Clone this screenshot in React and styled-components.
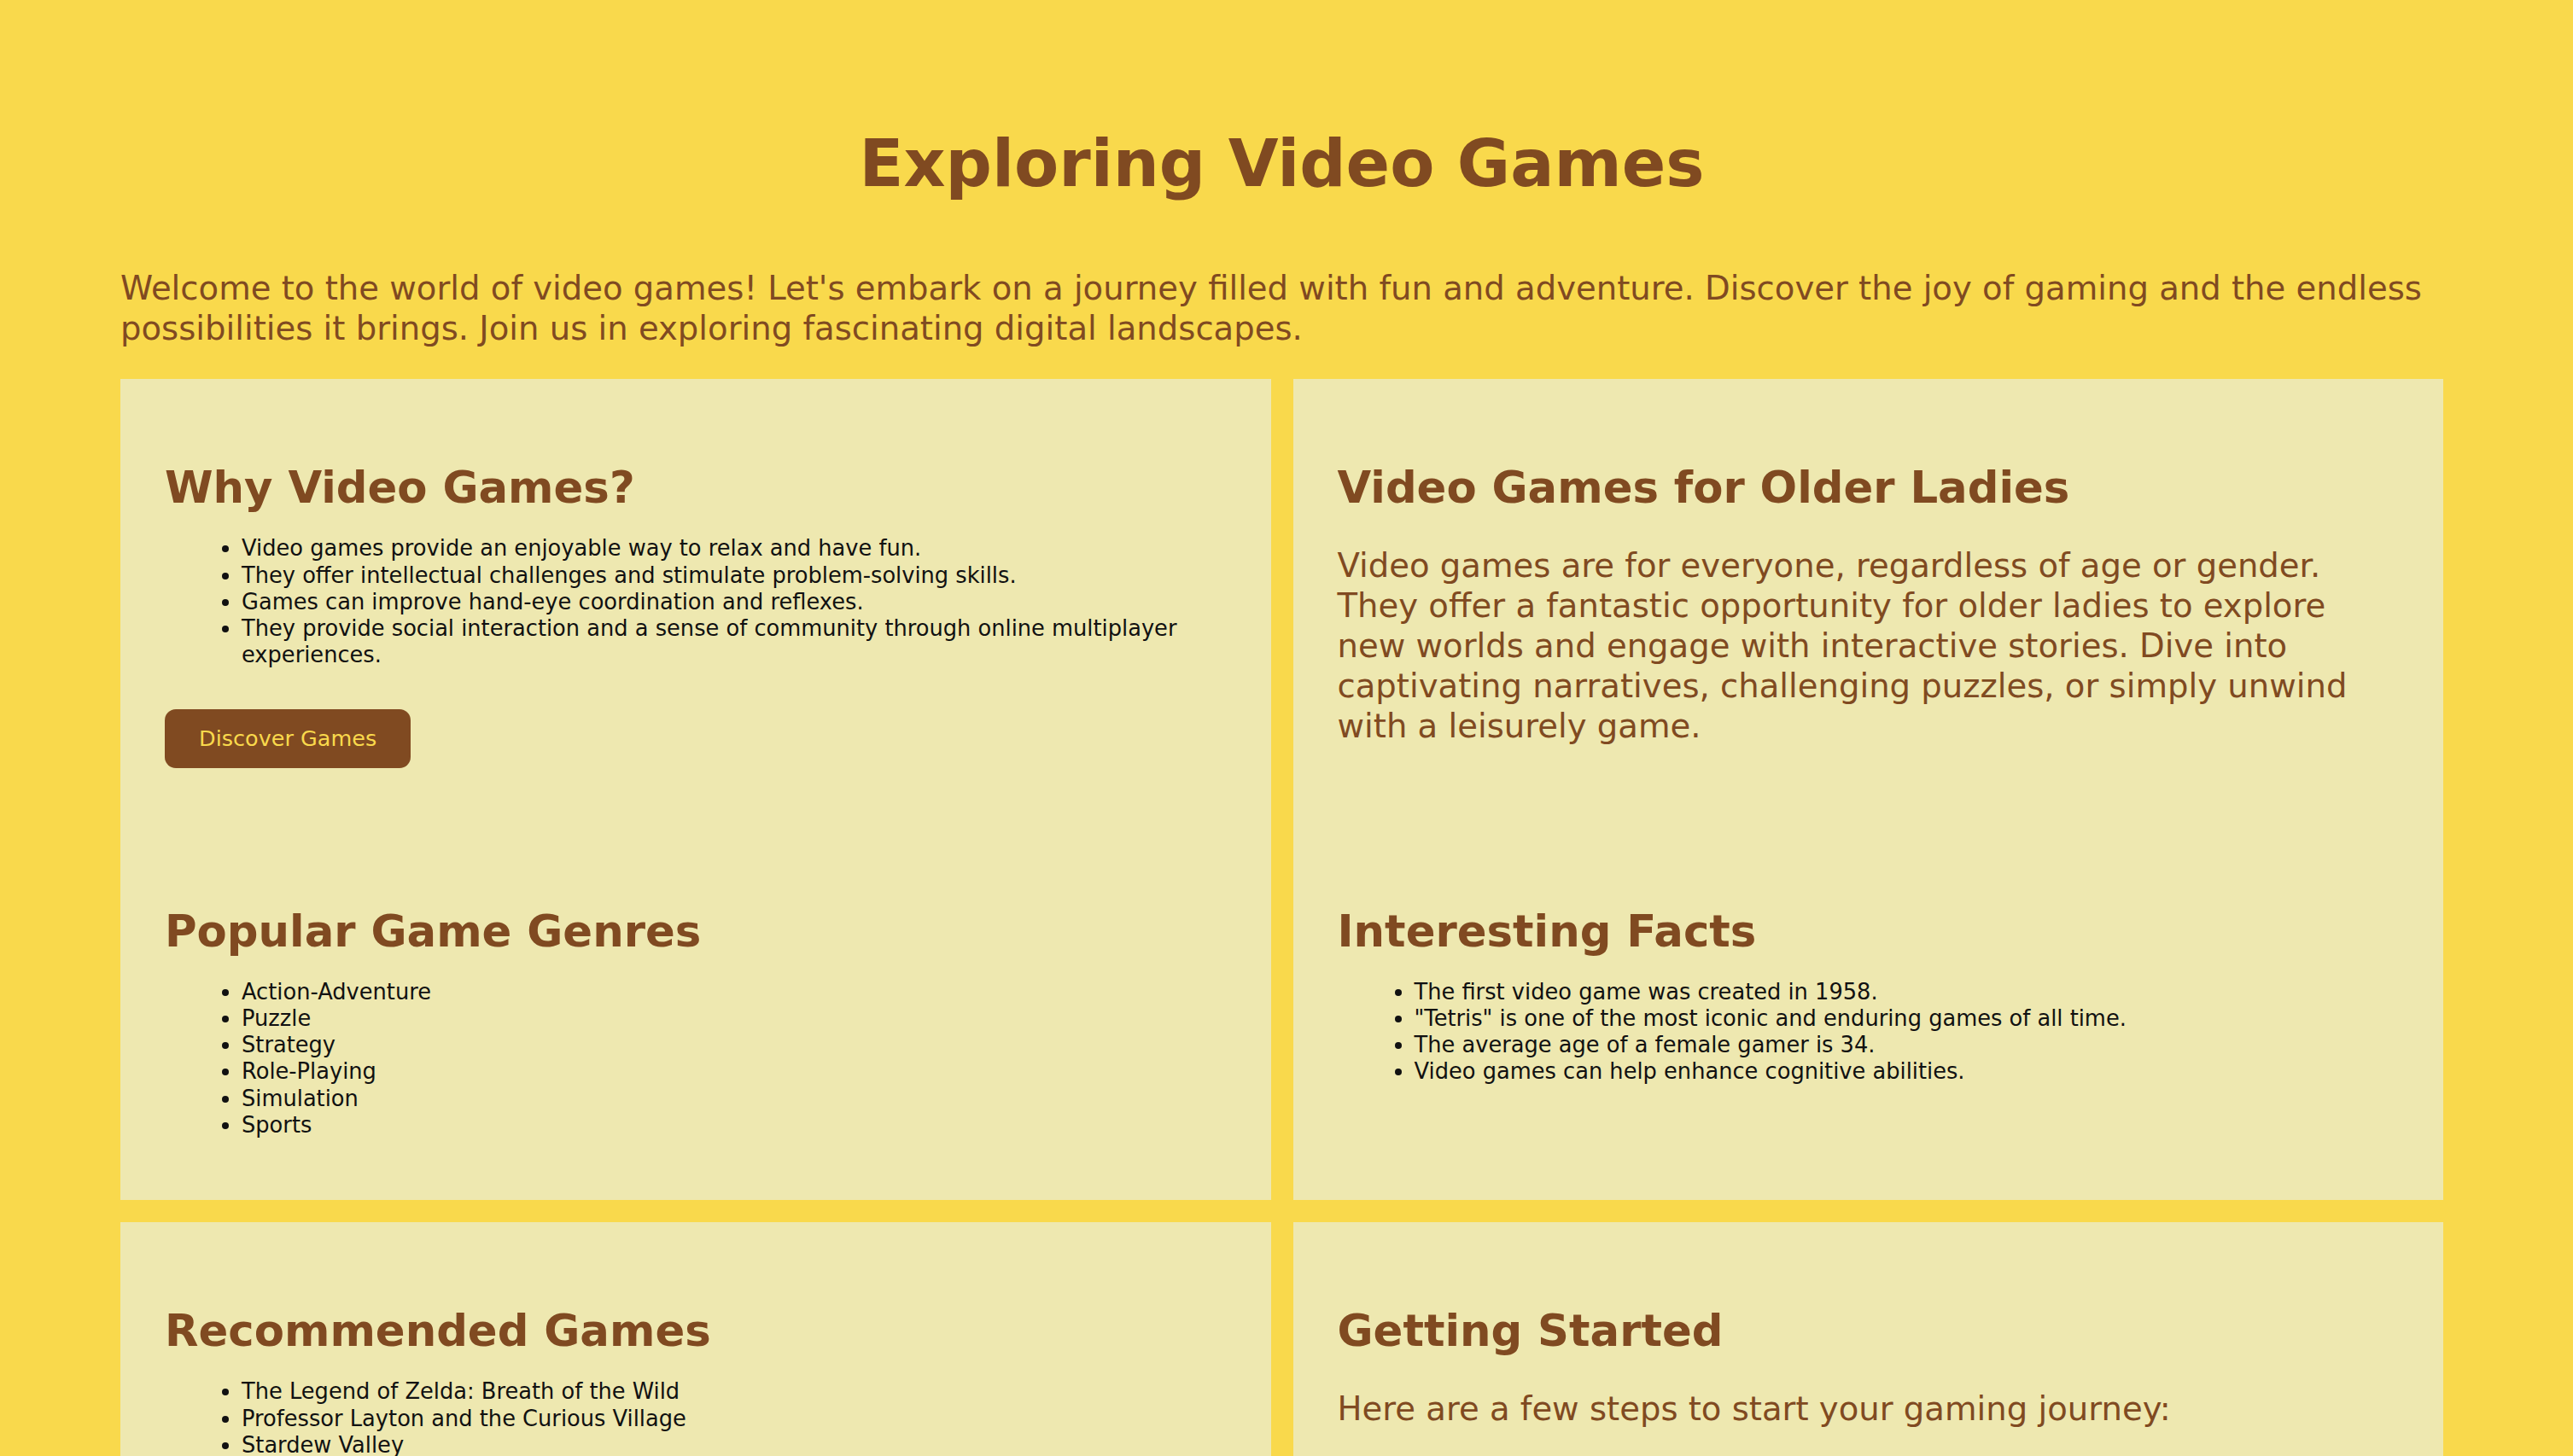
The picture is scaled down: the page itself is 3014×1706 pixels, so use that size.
import React from "react";
import styled, { createGlobalStyle } from "styled-components";

const brown = "#804a21";
const sun = "#f9d94c";
const paper = "#eee8b0";

const GlobalStyle = createGlobalStyle`
  html, body {
    margin: 0;
    padding: 0;
    background: ${sun};
  }
  body {
    font-family: "DejaVu Sans", Verdana, sans-serif;
    line-height: 1.215;
  }
`;

const sections = [
  {
    title: "Why Video Games?",
    items: [
      "Video games provide an enjoyable way to relax and have fun.",
      "They offer intellectual challenges and stimulate problem-solving skills.",
      "Games can improve hand-eye coordination and reflexes.",
      "They provide social interaction and a sense of community through online multiplayer experiences.",
    ],
    button: "Discover Games",
  },
  {
    title: "Video Games for Older Ladies",
    text: "Video games are for everyone, regardless of age or gender. They offer a fantastic opportunity for older ladies to explore new worlds and engage with interactive stories. Dive into captivating narratives, challenging puzzles, or simply unwind with a leisurely game.",
  },
  {
    title: "Popular Game Genres",
    items: ["Action-Adventure", "Puzzle", "Strategy", "Role-Playing", "Simulation", "Sports"],
  },
  {
    title: "Interesting Facts",
    items: [
      "The first video game was created in 1958.",
      "\"Tetris\" is one of the most iconic and enduring games of all time.",
      "The average age of a female gamer is 34.",
      "Video games can help enhance cognitive abilities.",
    ],
  },
  {
    title: "Recommended Games",
    items: [
      "The Legend of Zelda: Breath of the Wild",
      "Professor Layton and the Curious Village",
      "Stardew Valley",
      "Animal Crossing: New Horizons",
    ],
    spaced: true,
  },
  {
    title: "Getting Started",
    text: "Here are a few steps to start your gaming journey:",
    steps: [
      "Choose a gaming platform that suits you.",
      "Pick a game from a genre you enjoy.",
      "Take your time and have fun!",
    ],
    spaced: true,
  },
];

const App = () => (
  <Page>
    <GlobalStyle />
    <Title>Exploring Video Games</Title>
    <Intro>
      Welcome to the world of video games! Let's embark on a journey filled
      with fun and adventure. Discover the joy of gaming and the endless
      possibilities it brings. Join us in exploring fascinating digital
      landscapes.
    </Intro>
    <Board>
      {sections.map((s) => (
        <Section key={s.title} $spaced={s.spaced}>
          <Heading>{s.title}</Heading>
          {s.text && <Text>{s.text}</Text>}
          {s.items && (
            <List>
              {s.items.map((it) => (
                <li key={it}>{it}</li>
              ))}
            </List>
          )}
          {s.steps && (
            <List as="ol">
              {s.steps.map((it) => (
                <li key={it}>{it}</li>
              ))}
            </List>
          )}
          {s.button && <Button>{s.button}</Button>}
        </Section>
      ))}
    </Board>
  </Page>
);

const Page = styled.main`
  padding: 146px 152px 60px 141px;
  min-height: 100vh;
  box-sizing: border-box;
`;

const Title = styled.h1`
  margin: 0;
  text-align: center;
  font-size: 76px;
  font-weight: 700;
  line-height: 1.215;
  color: ${brown};
`;

const Intro = styled.p`
  margin: 77px 0 0;
  font-size: 38.6px;
  line-height: 1.215;
  color: ${brown};
`;

const Board = styled.div`
  margin-top: 35px;
  display: grid;
  grid-template-columns: 1fr 1fr;
  column-gap: 26px;
`;

const Section = styled.section`
  background: ${paper};
  padding: 96px 52px 64px;
  margin-top: ${(p) => (p.$spaced ? "26px" : "0")};
`;

const Heading = styled.h2`
  margin: 0 0 25px;
  font-size: 51.3px;
  font-weight: 700;
  line-height: 1.215;
  color: ${brown};
`;

const Text = styled.p`
  margin: 38px 0 0;
  font-size: 38.6px;
  line-height: 1.215;
  color: ${brown};
`;

const List = styled.ul`
  margin: 0 0 8px;
  padding-left: 90px;
  font-size: 25.7px;
  line-height: 1.215;
  color: #111;

  ${Text} + & {
    margin-top: 38px;
  }
`;

const Button = styled.button`
  display: inline-block;
  margin-top: 39px;
  padding: 18px 40px;
  border: none;
  border-radius: 13px;
  background: ${brown};
  color: ${sun};
  font-family: "DejaVu Sans", Verdana, sans-serif;
  font-size: 25.5px;
  line-height: 33px;
  cursor: pointer;
`;

export default App;
